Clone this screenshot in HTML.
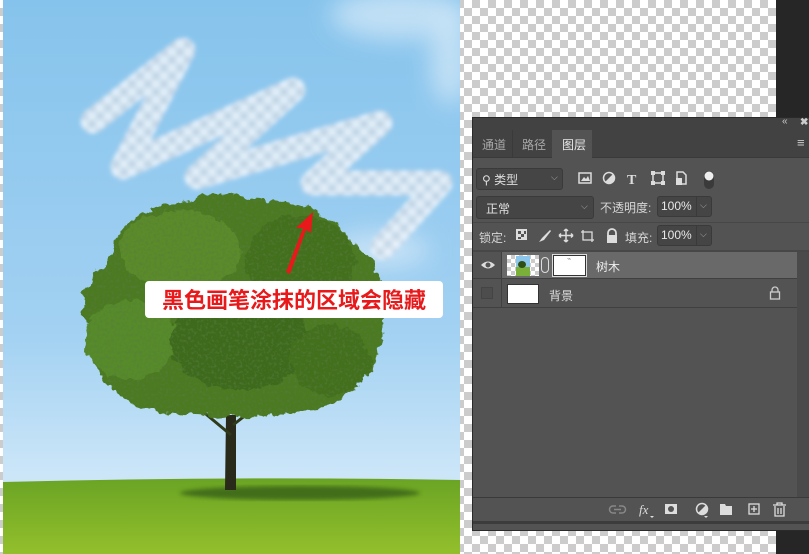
<!DOCTYPE html>
<html><head><meta charset="utf-8"><style>
*{margin:0;padding:0;box-sizing:border-box}
body{width:809px;height:554px;overflow:hidden;position:relative;background:#262626;font-family:"Liberation Sans","Noto Sans CJK SC",sans-serif}
.chk{position:absolute;background-color:#fff;background-image:linear-gradient(45deg,#ccc 25%,transparent 25%,transparent 75%,#ccc 75%),linear-gradient(45deg,#ccc 25%,transparent 25%,transparent 75%,#ccc 75%);background-size:16px 16px;background-position:0 0,8px 8px}
.p{position:absolute}
.t{position:absolute;color:#d6d6d6;font-size:12px;white-space:nowrap}
.box{position:absolute;background:#454545;border:1px solid #3a3a3a;border-radius:3px}
</style></head><body>
<div class="chk" style="left:0;top:0;width:776px;height:554px"></div>
<svg class="p" style="left:3px;top:0" width="457" height="554" viewBox="3 0 457 554">
<defs>
<linearGradient id="sky" x1="0" y1="0" x2="0" y2="1"><stop offset="0" stop-color="#86c3ec"/><stop offset="0.6" stop-color="#a2d1f2"/><stop offset="0.86" stop-color="#cce6f8"/></linearGradient>
<linearGradient id="gr" x1="0" y1="0" x2="0" y2="1"><stop offset="0" stop-color="#6aa424"/><stop offset="1" stop-color="#93bf2c"/></linearGradient>
<pattern id="ck" width="16" height="16" patternUnits="userSpaceOnUse"><rect width="16" height="16" fill="#eaf3fb"/><rect width="8" height="8" fill="#c9d8e6"/><rect x="8" y="8" width="8" height="8" fill="#c9d8e6"/></pattern>
<filter id="bl"><feGaussianBlur stdDeviation="2"/></filter>
<filter id="bl6" x="-100%" y="-100%" width="300%" height="300%"><feGaussianBlur stdDeviation="12"/></filter>
<filter id="leaf" x="-10%" y="-10%" width="120%" height="120%">
<feTurbulence type="fractalNoise" baseFrequency="0.09" numOctaves="3" seed="3" result="n"/>
<feDisplacementMap in="SourceGraphic" in2="n" scale="12" xChannelSelector="R" yChannelSelector="G" result="d"/>
<feTurbulence type="fractalNoise" baseFrequency="0.35" numOctaves="2" seed="7" result="n2"/>
<feColorMatrix in="n2" type="matrix" values="0 0 0 0 0.1  0 0 0 0 0.2  0 0 0 0 0.05  0 0 0 1.6 -0.75" result="dots"/>
<feComposite in="dots" in2="d" operator="in" result="dd"/>
<feMerge><feMergeNode in="d"/><feMergeNode in="dd"/></feMerge>
</filter>
</defs>
<rect x="3" y="0" width="457" height="554" fill="url(#sky)"/>
<ellipse cx="400" cy="15" rx="70" ry="25" fill="#e6f2fb" opacity=".6" filter="url(#bl6)"/>
<ellipse cx="450" cy="60" rx="20" ry="45" fill="#e6f2fb" opacity=".6" filter="url(#bl6)"/>
<ellipse cx="380" cy="250" rx="50" ry="18" fill="#e0eefa" opacity=".6" filter="url(#bl6)"/>
<polyline points="93,121 183,50 123,167 293,90 197,177 380,123 313,183 440,183 383,247" fill="none" stroke="url(#ck)" stroke-width="25" stroke-linejoin="round" stroke-linecap="round" opacity=".9" filter="url(#bl)"/>
<path d="M3 482 Q230 476 460 480 L460 554 L3 554Z" fill="url(#gr)"/>
<ellipse cx="300" cy="493" rx="120" ry="7" fill="#2f5412" opacity=".7" filter="url(#bl)"/>
<path d="M226 415 L236 415 L236 490 L225 490Z" fill="#2a2a1a"/>
<path d="M231 435 L195 405 M233 425 L265 400" stroke="#2f3a18" stroke-width="3"/>
<g filter="url(#leaf)">
<path d="M90 330 Q70 290 110 260 Q115 215 170 205 Q220 190 265 200 Q330 205 350 240 Q390 270 385 320 Q380 380 330 405 Q280 420 230 415 Q160 420 120 395 Q85 370 90 330Z" fill="#4b7a22"/>
<ellipse cx="180" cy="250" rx="60" ry="40" fill="#5a8a2c"/>
<ellipse cx="300" cy="260" rx="55" ry="45" fill="#436f1c"/>
<ellipse cx="130" cy="340" rx="45" ry="40" fill="#578a2a"/>
<ellipse cx="240" cy="340" rx="70" ry="50" fill="#3e6a1a"/>
<ellipse cx="330" cy="360" rx="40" ry="35" fill="#426f1d"/>
</g>
<path d="M286 272 L303 228 L296 228 L313 212 L311 233 L306 230 L290 274Z" fill="#e8191b"/>
<rect x="145" y="281" width="298" height="37" rx="4" fill="#fff"/>
<text x="294" y="308" text-anchor="middle" font-family="Liberation Sans,Noto Sans CJK SC,sans-serif" font-size="22" font-weight="bold" fill="#e8191b">黑色画笔涂抹的区域会隐藏</text>
</svg>
<div class="chk" style="left:0;top:0;width:3px;height:554px"></div>
<!-- panel -->
<div class="p" style="left:472px;top:117px;width:337px;height:414px;background:#535353;border:1px solid #2a2a2a;border-right:none"></div>
<div class="p" style="left:473px;top:118px;width:336px;height:12px;background:#424242"></div>
<div class="t" style="left:782px;top:116px;font-size:10px;color:#ccc">«</div>
<div class="t" style="left:800px;top:117px;font-size:10px;color:#ccc;font-weight:bold">✖</div>
<div class="p" style="left:473px;top:130px;width:336px;height:28px;background:#424242;border-bottom:1px solid #3a3a3a"></div>
<div class="p" style="left:512px;top:130px;width:1px;height:28px;background:#3a3a3a"></div>
<div class="p" style="left:552px;top:130px;width:40px;height:29px;background:#535353"></div>
<div class="t" style="left:482px;top:136px;color:#a8a8a8">通道</div>
<div class="t" style="left:522px;top:136px;color:#a8a8a8">路径</div>
<div class="t" style="left:562px;top:136px;color:#e8e8e8">图层</div>
<div class="t" style="left:797px;top:135px;color:#ccc;font-size:13px">≡</div>
<!-- row1 -->
<div class="box" style="left:476px;top:168px;width:87px;height:22px"></div>
<div class="t" style="left:482px;top:171px;color:#ddd">⚲ 类型</div>
<div class="t" style="left:551px;top:172px;color:#aaa;font-size:9px">⌵</div>
<svg class="p" style="left:578px;top:170px" width="140" height="20">
<rect x="1" y="3" width="12" height="10" fill="none" stroke="#ddd" stroke-width="1.5"/><path d="M3 11 L6 7 L8 9 L10 6 L12 11Z" fill="#ddd"/>
<circle cx="31" cy="8" r="5.5" fill="none" stroke="#ddd" stroke-width="1.5"/><path d="M27 12 A5.5 5.5 0 0 0 35 4Z" fill="#ddd"/>
<text x="49" y="14" font-size="14" font-weight="bold" font-family="Liberation Serif,serif" fill="#ddd">T</text>
<rect x="75" y="3" width="10" height="10" fill="none" stroke="#ddd" stroke-width="1.5"/><g fill="#ddd"><rect x="73" y="1" width="4" height="4"/><rect x="83" y="1" width="4" height="4"/><rect x="73" y="11" width="4" height="4"/><rect x="83" y="11" width="4" height="4"/></g>
<path d="M99 2 H105 L108 5 V14 H99Z" fill="none" stroke="#ddd" stroke-width="1.5"/><rect x="98" y="8" width="6" height="7" fill="#ddd"/>
<rect x="126" y="1" width="10" height="18" rx="5" fill="#3a3a3a"/><circle cx="131" cy="6" r="4.5" fill="#eee"/>
</svg>
<!-- row2 -->
<div class="box" style="left:476px;top:196px;width:118px;height:23px"></div>
<div class="t" style="left:486px;top:200px;color:#e0e0e0">正常</div>
<div class="t" style="left:581px;top:201px;color:#aaa;font-size:9px">⌵</div>
<div class="t" style="left:600px;top:199px">不透明度:</div>
<div class="box" style="left:657px;top:196px;width:55px;height:21px"></div>
<div class="p" style="left:696px;top:197px;width:1px;height:19px;background:#3a3a3a"></div>
<div class="t" style="left:661px;top:199px;color:#e8e8e8">100%</div>
<div class="t" style="left:700px;top:200px;color:#aaa;font-size:9px">⌵</div>
<div class="p" style="left:473px;top:222px;width:336px;height:1px;background:#474747"></div>
<!-- row3 -->
<div class="t" style="left:479px;top:229px">锁定:</div>
<svg class="p" style="left:515px;top:228px" width="80" height="16">
<rect x="1" y="1" width="11" height="11" fill="#ddd"/><g fill="#535353"><rect x="3" y="3" width="3" height="3"/><rect x="6" y="6" width="3" height="3"/><rect x="9" y="3" width="2" height="3"/><rect x="3" y="9" width="3" height="2"/></g>
<path d="M24 14 L27 10 L35 2 L36 3 L29 12Z" fill="#ddd"/>
<path d="M51 1 V14 M44 7.5 H58 M51 1 L49 3 M51 1 L53 3 M51 14 L49 12 M51 14 L53 12 M44 7.5 L46 5.5 M44 7.5 L46 9.5 M58 7.5 L56 5.5 M58 7.5 L56 9.5" stroke="#ddd" stroke-width="1.5" fill="none"/>
<path d="M66 4 H77 V14 M68 2 V12 H79" stroke="#ddd" stroke-width="1.3" fill="none"/>
</svg>
<svg class="p" style="left:605px;top:228px" width="14" height="16"><path d="M3 7 V5 A4 4 0 0 1 11 5 V7" stroke="#ddd" stroke-width="1.8" fill="none"/><rect x="2" y="7" width="10" height="8" fill="#ddd"/></svg>
<div class="t" style="left:625px;top:229px">填充:</div>
<div class="box" style="left:657px;top:225px;width:55px;height:21px"></div>
<div class="p" style="left:696px;top:226px;width:1px;height:19px;background:#3a3a3a"></div>
<div class="t" style="left:661px;top:228px;color:#e8e8e8">100%</div>
<div class="t" style="left:700px;top:229px;color:#aaa;font-size:9px">⌵</div>
<div class="p" style="left:473px;top:250px;width:336px;height:2px;background:#474747"></div>
<!-- layers -->
<div class="p" style="left:797px;top:252px;width:12px;height:245px;background:#4a4a4a"></div>
<div class="p" style="left:502px;top:252px;width:295px;height:26px;background:#696969"></div>
<div class="p" style="left:473px;top:278px;width:324px;height:1px;background:#404040"></div>
<div class="p" style="left:501px;top:252px;width:1px;height:56px;background:#404040"></div>
<div class="p" style="left:473px;top:307px;width:324px;height:1px;background:#404040"></div>
<svg class="p" style="left:480px;top:259px" width="16" height="12"><path d="M1 6 Q8 -1 15 6 Q8 13 1 6Z" fill="#ddd"/><circle cx="8" cy="6" r="2.5" fill="#535353"/></svg>
<div class="p chk" style="left:507px;top:255px;width:32px;height:21px;background-size:8px 8px;background-position:0 0,4px 4px"></div>
<div class="p" style="left:516px;top:256px;width:14px;height:20px;background:linear-gradient(#8cc6ec 55%,#7ab03a 55%)"></div>
<div class="p" style="left:518px;top:261px;width:8px;height:7px;background:#2d4e14;border-radius:50%"></div>
<div class="p" style="left:541px;top:257px;width:8px;height:16px;border:1.5px solid #ddd;border-radius:4px"></div>
<div class="p" style="left:552px;top:254px;width:35px;height:23px;border:1px solid #ddd;background:#fff;outline:1px solid #333;outline-offset:-2px"></div>
<div class="t" style="left:567px;top:255px;font-size:7px;color:#888">⌁</div>
<div class="t" style="left:596px;top:258px;color:#eee">树木</div>
<div class="p" style="left:481px;top:287px;width:12px;height:12px;border:1px solid #444;background:#4d4d4d"></div>
<div class="p" style="left:507px;top:284px;width:32px;height:20px;background:#fff;border:1px solid #333"></div>
<div class="t" style="left:549px;top:287px;color:#ddd">背景</div>
<svg class="p" style="left:769px;top:286px" width="12" height="14"><path d="M3 6 V4 A3 3 0 0 1 9 4 V6" stroke="#ccc" stroke-width="1.3" fill="none"/><rect x="1.5" y="6" width="9" height="7" fill="none" stroke="#ccc" stroke-width="1.3"/></svg>
<!-- bottom bar -->
<div class="p" style="left:473px;top:497px;width:336px;height:1px;background:#3a3a3a"></div>
<div class="p" style="left:473px;top:521px;width:336px;height:3px;background:#3c3c3c"></div>
<svg class="p" style="left:608px;top:501px" width="185" height="18">
<path d="M8 5 H5 A3.5 3.5 0 0 0 5 12 H8 M11 5 H14 A3.5 3.5 0 0 1 14 12 H11 M6 8.5 H13" stroke="#888" stroke-width="1.5" fill="none"/>
<text x="31" y="13" font-size="13" font-style="italic" font-family="Liberation Serif,serif" fill="#ddd">fx</text><path d="M42 15 h4 l-2 2z" fill="#ddd"/>
<rect x="57" y="3" width="12" height="10" fill="#ddd"/><circle cx="63" cy="8" r="3" fill="#535353"/>
<circle cx="94" cy="8" r="5.5" fill="none" stroke="#ddd" stroke-width="1.5"/><path d="M90 12 A5.5 5.5 0 0 0 98 4Z" fill="#ddd"/><path d="M96 15 h4 l-2 2z" fill="#ddd"/>
<path d="M112 3 H117 L118 5 H124 V14 H112Z" fill="#ddd"/>
<rect x="141" y="3" width="10" height="10" fill="none" stroke="#ddd" stroke-width="1.3"/><path d="M146 5 V11 M143 8 H149" stroke="#ddd" stroke-width="1.3"/>
<path d="M165 4 H178 M169 4 V2 H174 V4 M167 5 V15 H176 V5 M170 7 V13 M173 7 V13" stroke="#ddd" stroke-width="1.3" fill="none"/>
</svg>
</body></html>
